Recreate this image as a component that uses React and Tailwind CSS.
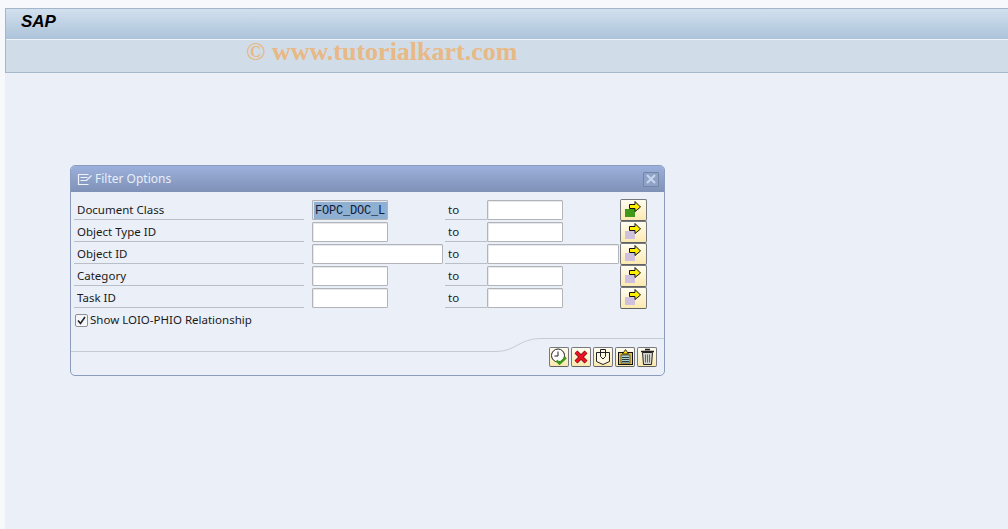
const rows = [
  { label: "Document Class", value: "FOPC_DOC_L", active: true },
  { label: "Object Type ID" },
  { label: "Object ID", wide: true },
  { label: "Category" },
  { label: "Task ID" },
];

function Arrow({ active }) {
  return (
    <svg width="25" height="20" viewBox="0 0 25 20">
      <rect x="4" y="9" width="10" height="8" fill={active ? "#3f9a1a" : "#cfc0de"} />
      <path d="M8.500 4.500h5.500V1.500L19.500 7 14 11.500V8.500H8.500z" fill="#ffee00" stroke="#111" strokeWidth="1" />
    </svg>
  );
}

function YellowButton({ children, className }) {
  return (
    <button className={"relative flex items-center justify-center rounded-[2px] border border-[#77797c] border-b-[#5f6163] bg-gradient-to-b from-[#fffdf0] to-[#fbe9ae] " + className}>
      {children}
    </button>
  );
}

function Field({ value, wide, active, wideClass }) {
  return (
    <div
      className={
        "h-[20px] border border-[#b1b5b9] rounded-[1px] flex items-center pl-[2px] pt-[1px] overflow-hidden shadow-[inset_1px_1px_0_#e6e8ec] " +
        (wide ? wideClass : "w-[76px]") +
        (active ? " bg-[#8fb0d2]" : " bg-white")
      }
    >
      {value && <span className="font-['Liberation_Mono',monospace] text-[12px] leading-none text-[#10203a] tracking-[-0.2px]">{value}</span>}
    </div>
  );
}

function Row({ row }) {
  return (
    <div className="flex h-[22px] items-start">
      <div className="w-[230px] ml-[3px] h-[21px] border-b border-[#b9bfc6] pl-[3px] pt-[3px] leading-[16px]">{row.label}</div>
      <div className="ml-[8px] mt-[1px]">
        <Field value={row.value} active={row.active} wide={row.wide} wideClass="w-[131px]" />
      </div>
      <div className={(row.wide ? "ml-[2px]" : "ml-[57px]") + " w-[42px] h-[21px] border-b border-[#b9bfc6] pl-[3px] pt-[3px] leading-[16px]"}>to</div>
      <div className="mt-[1px]">
        <Field wide={row.wide} wideClass="w-[132px]" />
      </div>
      <YellowButton className={(row.wide ? "ml-[1px]" : "ml-[57px]") + " w-[27px] h-[22px]"}>
        <Arrow active={row.active} />
      </YellowButton>
    </div>
  );
}

export default function App() {
  return (
    <div className="relative w-[1008px] h-[529px] overflow-hidden bg-[#f6f8fc] pt-2 pl-[5px] flex flex-col font-['Noto_Sans',sans-serif] text-[11.500px] text-[#1a1a1a]">
      <div className="border-t border-l border-[#a5b5c9]">
        <div className="h-[30px] bg-gradient-to-b from-[#d2e0ee] to-[#acc3da] pl-[15px] pt-[4px] font-['Liberation_Sans',sans-serif] font-bold italic text-[17px] leading-[18px] text-black">
          SAP
        </div>
        <div className="h-[34px] border-t border-[#eef3f8] border-b border-b-[#a8b9cc] bg-[#d0dde8]"></div>
      </div>

      {/* watermark */}
      <div className="absolute left-[246px] top-[37px] font-['Liberation_Serif',serif] font-bold text-[26px] leading-[30px] text-[#e8b885] whitespace-nowrap">
        © www.tutorialkart.com
      </div>

      <div className="flex-1 bg-[#ebf0f8] pl-[65px] pt-[92px]">
        <div className="w-[595px] h-[211px] rounded-[5px] border border-[#8b9cbf] flex flex-col overflow-hidden">
          <div className="h-[26px] shrink-0 bg-gradient-to-b from-[#9bb0dc] to-[#7f91b6] flex items-center pl-[6px] pr-[5px] text-[#e8eef8]">
            <svg width="15" height="13" viewBox="0 0 15 13" fill="none" stroke="#eef3fb" strokeWidth="1.200">
              <path d="M11.500 1.500h-10v10h10M3.500 4.500h7M14.500 2.500L9.500 7.500h-6" />
            </svg>
            <span className="ml-[3px] flex-1 text-[12px]">Filter Options</span>
            <div className="w-[16px] h-[15px] rounded-[1px] bg-[#8ea2c8] border border-[#75859f] flex items-center justify-center">
              <svg width="10" height="10" viewBox="0 0 10 10" stroke="#c6d6ee" strokeWidth="2.200">
                <path d="M1 1l8 8M9 1l-8 8" />
              </svg>
            </div>
          </div>

          <div className="pt-[7px]">
            {rows.map((row) => (
              <Row key={row.label} row={row} />
            ))}
          </div>

          <div className="flex items-center h-[18px] ml-[4px] mt-[2px]">
            <div className="w-[13px] h-[13px] bg-[#f4f6fa] border border-[#8d9196] rounded-[2px] flex items-center justify-center">
              <svg width="11" height="11" viewBox="0 0 11 11" fill="none" stroke="#222" strokeWidth="1.600">
                <path d="M2 5.500l2.500 3L9 2" />
              </svg>
            </div>
            <span className="ml-[2px]">Show LOIO-PHIO Relationship</span>
          </div>

          <div className="relative flex-1 flex justify-end items-start pt-[18px] pr-[7px] gap-[2px]">
            <svg className="absolute left-0 top-[8px]" width="593" height="16" viewBox="0 0 593 16" fill="none" stroke="#c3cbd6">
              <path d="M0 14.500H425C445 14.500 448 1.500 470 1.500H593" />
            </svg>
            <YellowButton className="w-[20px] h-[20px]">
              <svg width="18" height="18" viewBox="0 0 18 18" fill="none">
                <circle cx="8" cy="7.500" r="6.500" fill="#fff" stroke="#222" />
                <path d="M8 3.500v4.500h-3.500" stroke="#222" />
                <path d="M6.500 12.500l3 3 6.500-6" stroke="#3f9a1a" strokeWidth="2.400" />
              </svg>
            </YellowButton>
            <YellowButton className="w-[20px] h-[20px]">
              <svg width="16" height="16" viewBox="0 0 16 16" fill="none">
                <path d="M3 3l10 10M13 3L3 13" stroke="#6b1a1a" strokeWidth="4.200" />
                <path d="M3 3l10 10M13 3L3 13" stroke="#ee1122" strokeWidth="2.800" />
              </svg>
            </YellowButton>
            <YellowButton className="w-[20px] h-[20px]">
              <svg width="16" height="18" viewBox="0 0 16 18" fill="none" stroke="#222">
                <path d="M1.500 4.500h13v9l-6.500 3-6.500-3z" fill="#fdf8e4" />
                <path d="M5.500 8.500v-7h5v7" />
                <path d="M5.500 8.500l2.500 2.500 2.500-2.500" />
              </svg>
            </YellowButton>
            <YellowButton className="w-[20px] h-[20px]">
              <svg width="17" height="18" viewBox="0 0 17 18" stroke="#111">
                <rect x="1.500" y="4.500" width="14" height="12" fill="#e8c050" />
                <rect x="4" y="7" width="9" height="8" fill="#a9d3d0" strokeWidth="0.600" />
                <path d="M5 9.500h7M5 11.500h7M5 13.500h7" strokeWidth="0.800" />
                <path d="M5.500 6l3-4.500 3 4.500z" fill="#ffd800" strokeWidth="0.800" />
              </svg>
            </YellowButton>
            <YellowButton className="w-[20px] h-[20px]">
              <svg width="15" height="18" viewBox="0 0 15 18" stroke="#222">
                <path d="M2.500 4.500h10l-1 12h-8z" fill="#d5d5d0" />
                <path d="M1 3.500h13M5 1.500h5" strokeWidth="1.400" />
                <path d="M5.500 6.500v8M7.500 6.500v8M9.500 6.500v8" stroke="#666" />
              </svg>
            </YellowButton>
          </div>
        </div>
      </div>
    </div>
  );
}
